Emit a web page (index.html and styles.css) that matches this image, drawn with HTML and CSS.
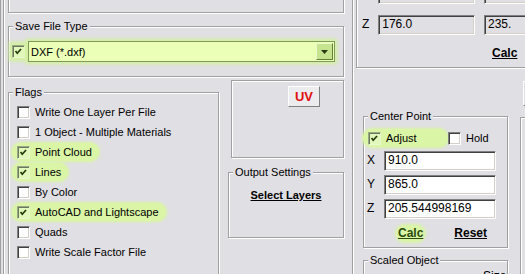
FILE: index.html
```html
<!DOCTYPE html>
<html lang="en">
<head>
  <meta charset="UTF-8" />
  <title>Export Options</title>
  <link rel="stylesheet" href="styles.css">
</head>
<body>

<div class="window">
  <div class="pane pane-left">
    <div class="group top-cut"></div>

    <fieldset class="group save-type">
      <legend>Save File Type</legend>
      <div class="save-row">
        <span class="check on glow"><svg viewBox="0 0 13 13"><polyline points="3,6 5,8.5 9.5,3.5" /></svg></span>
        <div class="combo">
          <span>DXF (*.dxf)</span>
          <span class="combo-btn"><svg viewBox="0 0 7 4"><polygon points="0,0 7,0 3.5,4" /></svg></span>
        </div>
      </div>
    </fieldset>

    <div class="lower">
      <fieldset class="group flags">
        <legend>Flags</legend>
        <ul class="flag-list">
          <li><label class="opt"><span class="check"></span>Write One Layer Per File</label></li>
          <li><label class="opt"><span class="check"></span>1 Object - Multiple Materials</label></li>
          <li><label class="opt on"><span class="check on"><svg viewBox="0 0 13 13"><polyline points="3,6 5,8.5 9.5,3.5" /></svg></span>Point Cloud</label></li>
          <li><label class="opt on"><span class="check on"><svg viewBox="0 0 13 13"><polyline points="3,6 5,8.5 9.5,3.5" /></svg></span>Lines</label></li>
          <li><label class="opt"><span class="check"></span>By Color</label></li>
          <li><label class="opt on"><span class="check on"><svg viewBox="0 0 13 13"><polyline points="3,6 5,8.5 9.5,3.5" /></svg></span>AutoCAD and Lightscape</label></li>
          <li><label class="opt"><span class="check"></span>Quads</label></li>
          <li><label class="opt"><span class="check"></span>Write Scale Factor File</label></li>
        </ul>
      </fieldset>

      <div class="side">
        <div class="group uv-box">
          <button class="uv">UV</button>
        </div>
        <fieldset class="group output">
          <legend>Output Settings</legend>
          <a class="link">Select Layers</a>
        </fieldset>
      </div>
    </div>
  </div>

  <div class="pane pane-right">
    <div class="group coords">
      <div class="coord-row">
        <span class="axis">Y</span>
        <span class="field off">0</span>
        <span class="field off wide">1,73</span>
      </div>
      <div class="coord-row">
        <span class="axis">Z</span>
        <span class="field off">176.0</span>
        <span class="field off wide">235.</span>
      </div>
      <div class="coord-calc"><a class="link">Calc</a></div>
    </div>

    <div class="right-lower">
      <div class="col-a">
        <fieldset class="group center">
          <legend>Center Point</legend>
          <div class="cp-checks">
            <label class="opt on"><span class="check on"><svg viewBox="0 0 13 13"><polyline points="3,6 5,8.5 9.5,3.5" /></svg></span>Adjust</label>
            <label class="opt"><span class="check"></span>Hold</label>
          </div>
          <div class="cp-row"><span class="axis">X</span><span class="field">910.0</span></div>
          <div class="cp-row"><span class="axis">Y</span><span class="field">865.0</span></div>
          <div class="cp-row"><span class="axis">Z</span><span class="field">205.544998169</span></div>
          <div class="cp-actions">
            <a class="link pill">Calc</a>
            <a class="link">Reset</a>
          </div>
        </fieldset>
        <fieldset class="group scaled">
          <legend>Scaled Object</legend>
          <div class="scaled-text">Size</div>
        </fieldset>
      </div>
      <div class="col-b">
        <div class="edge-btn"></div>
        <div class="group edge-group"></div>
      </div>
    </div>
  </div>
</div>

</body>
</html>
```

FILE: styles.css
```css
body {
  margin: 0;
  background-color: #e0dfe3;
  font-family: "Liberation Sans", Arial, sans-serif;
  font-size: 11px;
  color: #000;
  overflow: hidden;
}
.window {
  display: flex;
  width: 525px;
  height: 274px;
  overflow: hidden;
}
.pane {
  box-sizing: border-box;
  height: 274px;
  flex: none;
}
.pane-left {
  width: 352px;
  border-left: 1px solid #a0a0a0;
  box-shadow: inset 2px 0 #e0dfe3, inset 3px 0 #a0a0a0, inset 4px 0 #fff;
  padding: 0 8px 0 7px;
}
.pane-right {
  width: 173px;
  border-left: 1px solid #a0a0a0;
  box-shadow: inset 1px 0 #fff;
  padding-left: 3px;
}

/* etched group boxes */
.group {
  border: 1px solid #a0a0a0;
  box-shadow: inset 1px 1px #fff, 1px 1px #fff;
  margin: 0;
  padding: 0;
  min-width: 0;
  box-sizing: border-box;
}
.group legend {
  margin-left: 4px;
  padding: 0 2px;
  line-height: 13px;
  background-color: #e0dfe3;
}
.top-cut {
  height: 23px;
  margin-top: -10px;
}
.save-type {
  margin-top: 7px;
}
.save-row {
  display: flex;
  align-items: center;
  gap: 3px;
  padding: 8px 0 14px 3px;
}

/* checkboxes */
.check {
  flex: none;
  width: 13px;
  height: 13px;
  box-sizing: border-box;
  background-color: #fff;
  border: 1px solid;
  border-color: #808080 #fff #fff #808080;
  box-shadow: inset 1px 1px #404040, inset -1px -1px #d4d0c8;
}
.check svg {
  display: block;
  width: 11px;
  height: 11px;
  margin: 0;
}
.check svg polyline {
  fill: none;
  stroke: #1f3a08;
  stroke-width: 2;
}
.check.on {
  background-color: #e2f7bb;
  border-color: #9aa88a #e8f8d0 #e8f8d0 #9aa88a;
  box-shadow: inset 1px 1px #6a7a58;
}
.check.glow {
  box-shadow: inset 1px 1px #6a7a58, 0 0 4px 3px #d2f29a;
}

/* combo */
.combo {
  display: flex;
  align-items: center;
  width: 307px;
  height: 21px;
  box-sizing: border-box;
  padding: 0 1px 0 2px;
  border: 1px solid #7f9a58;
  background-color: #ebffb6;
  box-shadow: 0 0 4px 2px #d2f29a;
}
.combo-btn {
  margin-left: auto;
  width: 17px;
  height: 17px;
  box-sizing: border-box;
  display: flex;
  align-items: center;
  justify-content: center;
  background-color: #c6e48f;
  border: 1px solid;
  border-color: #eaf8cc #63803a #63803a #eaf8cc;
}
.combo-btn svg {
  width: 7px;
  height: 4px;
  fill: #2b3a14;
}

/* lower left */
.lower {
  display: flex;
  align-items: flex-start;
  margin-top: 3px;
}
.flags {
  width: 211px;
  height: 200px;
  margin-top: 6px;
}
.flag-list {
  list-style: none;
  margin: 0;
  padding: 3px 0 0 8px;
}
.flag-list li {
  height: 20px;
  display: flex;
  align-items: center;
}
.opt {
  display: inline-flex;
  align-items: center;
  height: 18px;
  white-space: nowrap;
}
.opt .check {
  margin-right: 5px;
}
.opt.on {
  margin-left: -5px;
  padding: 0 7px 0 5px;
  border-radius: 9px;
  background-color: #daf5a6;
  box-shadow: 0 0 3px 1px #daf5a6;
}
.side {
  width: 116px;
  margin-left: 9px;
}
.uv-box {
  margin-left: 3px;
  height: 78px;
  display: flex;
  justify-content: flex-end;
  align-items: flex-start;
  padding: 5px 23px 0 0;
}
.uv {
  width: 32px;
  height: 21px;
  padding: 0;
  border: 1px solid;
  border-color: #fff #808080 #808080 #fff;
  background-color: #ecebee;
  color: #e01010;
  font-family: "Liberation Sans", Arial, sans-serif;
  font-weight: bold;
  font-size: 13px;
}
.output {
  margin-top: 8px;
  height: 72px;
}
.link {
  font-weight: bold;
  text-decoration: underline;
  line-height: 13px;
}
.output .link {
  display: block;
  text-align: center;
  padding-top: 10px;
}

/* right pane */
.coords {
  margin-top: -20px;
  margin-right: -20px;
  padding: 3px 0 7px 5px;
}
.coord-row {
  display: flex;
  align-items: center;
  height: 20px;
  margin-bottom: 11px;
}
.coord-row:last-of-type {
  margin-bottom: 0;
}
.axis {
  width: 19px;
  font-size: 12px;
  padding-bottom: 3px;
}
.field {
  width: 112px;
  height: 20px;
  box-sizing: border-box;
  padding: 0 3px;
  line-height: 17px;
  font-size: 12px;
  background-color: #fff;
  border: 1px solid;
  border-color: #808080 #fff #fff #808080;
  box-shadow: inset 1px 1px #404040, inset -1px -1px #d4d0c8;
  white-space: nowrap;
  overflow: hidden;
}
.field.off {
  background-color: #e0dfe3;
}
.field.wide {
  margin-left: 9px;
  width: 60px;
  flex: none;
}
.coord-calc {
  margin-top: 8px;
  padding-left: 130px;
  font-size: 12px;
}

.right-lower {
  display: flex;
  align-items: flex-start;
}
.col-a {
  width: 145px;
  margin-left: 7px;
  flex: none;
}
.center {
  margin-top: 42px;
  height: 138px;
  padding-bottom: 7px;
}
.cp-checks {
  display: grid;
  grid-template-columns: 80px auto;
  align-items: center;
  height: 20px;
  padding: 5px 0 0 4px;
}
.cp-row {
  display: flex;
  align-items: center;
  margin-top: 4px;
  padding-left: 3px;
}
.cp-checks + .cp-row {
  margin-top: 3px;
}
.cp-row .axis {
  width: 17px;
}
.cp-actions {
  display: flex;
  gap: 31px;
  margin-top: 8px;
  padding-left: 34px;
  font-size: 12px;
}
.pill {
  border-radius: 8px;
  background-color: #daf5a6;
  box-shadow: 0 0 3px 3px #daf5a6;
  color: #2b4a0c;
}
.scaled {
  margin-top: 6px;
  height: 40px;
}
.scaled-text {
  padding: 2px 0 0 119px;
  font-size: 12px;
}
.col-b {
  margin-left: 12px;
  width: 20px;
  flex: none;
}
.edge-btn {
  margin-top: 13px;
  margin-left: 3px;
  height: 25px;
  border-top: 1px solid #fff;
  border-left: 1px solid #fff;
  border-bottom: 1px solid #808080;
  box-sizing: border-box;
}
.edge-group {
  margin-top: 11px;
  height: 170px;
}
```
